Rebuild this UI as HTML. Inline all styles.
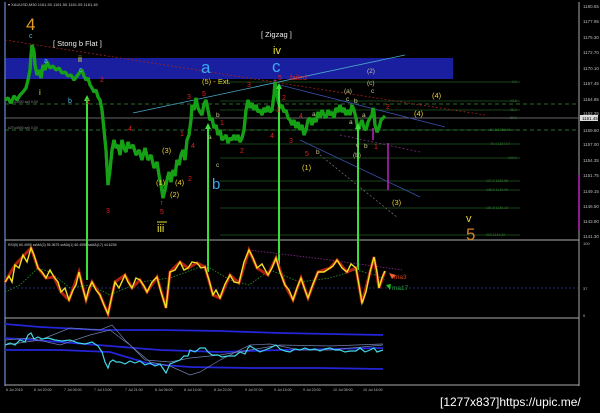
<!DOCTYPE html>
<html><head><meta charset="utf-8"><style>
html,body{margin:0;padding:0;background:#000;width:600px;height:413px;overflow:hidden}
svg{display:block}
text{font-family:"Liberation Sans",sans-serif}
</style></head><body>
<svg width="600" height="413" viewBox="0 0 600 413" xmlns="http://www.w3.org/2000/svg">
<rect width="600" height="413" fill="#000"/>
<rect x="5" y="58" width="448" height="21" fill="#1a1fa0"/>
<line x1="5" y1="2" x2="5" y2="386" stroke="#5870a8" stroke-width="1.5"/>
<line x1="579" y1="2" x2="579" y2="386" stroke="#aaa" stroke-width="1"/>
<line x1="5" y1="240" x2="579" y2="240" stroke="#aaa"/>
<line x1="5" y1="318" x2="579" y2="318" stroke="#aaa"/>
<line x1="5" y1="385" x2="579" y2="385" stroke="#aaa"/>
<g stroke="#1f5a1f" stroke-width="0.8">
<line x1="220" y1="82" x2="520" y2="82"/><line x1="220" y1="101" x2="520" y2="101"/>
<line x1="220" y1="110" x2="520" y2="110"/><line x1="220" y1="130" x2="520" y2="130"/>
<line x1="220" y1="144" x2="520" y2="144"/><line x1="220" y1="158" x2="520" y2="158"/>
<line x1="220" y1="181" x2="520" y2="181"/><line x1="220" y1="190" x2="520" y2="190"/>
<line x1="220" y1="208" x2="520" y2="208"/><line x1="220" y1="235" x2="520" y2="235"/>
</g>
<g fill="#2c7a2c" font-size="3.5">
<text x="512" y="83">0.0</text><text x="510" y="102">23.6</text><text x="510" y="111">38.2</text>
<text x="510" y="119">50.0</text><text x="490" y="131">61.8 1159.60</text><text x="490" y="145">76.4 1157.07</text>
<text x="508" y="159">100.0</text><text x="486" y="182">127.2 1150.88</text><text x="486" y="191">138.2 1149.30</text>
<text x="486" y="209">161.8 1146.10</text><text x="486" y="236">200 1141.30</text>
</g>
<line x1="5" y1="104" x2="579" y2="104" stroke="#3a8a3a" stroke-width="0.8" stroke-dasharray="4,3"/>
<line x1="5" y1="130" x2="579" y2="130" stroke="#3a8a3a" stroke-width="0.8" stroke-dasharray="4,3"/>
<line x1="5" y1="118" x2="579" y2="118" stroke="#888" stroke-width="0.8"/>
<g fill="#888" font-size="3.5"><text x="8" y="103">#2Tu4900 sell 0.00</text><text x="8" y="129">#2Tu4900 sell 0.00</text></g>
<line x1="5" y1="40" x2="485" y2="115" stroke="#a02020" stroke-width="0.8" stroke-dasharray="2,2"/>
<line x1="133" y1="113" x2="405" y2="55" stroke="#4aa8c8" stroke-width="0.8"/>
<line x1="280" y1="85" x2="445" y2="127" stroke="#3a50b0" stroke-width="0.8"/>
<line x1="300" y1="140" x2="420" y2="197" stroke="#3a50b0" stroke-width="0.8"/>
<line x1="320" y1="155" x2="398" y2="218" stroke="#777" stroke-width="0.7" stroke-dasharray="2,2"/>
<line x1="340" y1="135" x2="420" y2="152" stroke="#803080" stroke-width="0.8" stroke-dasharray="2,2"/>
<line x1="388" y1="143" x2="388" y2="190" stroke="#c020c0" stroke-width="1.5"/>
<line x1="373" y1="128" x2="373" y2="140" stroke="#c020c0" stroke-width="1.5"/>
<line x1="579" y1="175" x2="579" y2="230" stroke="#c020c0" stroke-width="1.5"/>
<g fill="none" stroke-linejoin="bevel">
<polyline id="p" stroke="#16a016" stroke-width="3.2" points="5,100 8,98 11,103 14,96 17,100 20,95 23,92 26,88 28,80 30,70 31,55 32,45 34,52 35,65 37,75 39,70 41,78 43,65 45,70 47,62 50,68 53,66 56,70 59,68 62,73 65,72 68,76 71,75 74,80 77,76 80,72 82,70 84,76 86,80 88,78 90,85 92,88 94,92 96,90 98,97 100,100 102,110 104,130 106,150 108,185 110,170 112,150 114,140 116,148 118,145 120,155 122,140 124,148 126,152 128,142 130,148 133,145 136,155 139,150 142,160 145,148 148,160 151,155 154,168 157,162 159,175 161,185 163,198 165,190 167,180 169,172 171,182 173,170 175,176 177,160 179,165 181,155 183,150 185,160 187,140 189,135 191,120 192,105 194,110 196,98 198,108 200,112 202,115 204,104 206,100 208,110 210,120 212,118 214,128 216,125 218,135 220,130 222,140 224,138 226,135 228,143 230,138 232,140 234,135 236,140 238,135 240,142 242,138 244,130 246,110 248,100 250,108 252,103 254,110 256,105 258,112 260,110 262,115 264,108 266,112 268,106 270,112 272,110 274,95 275,82 276,90 278,100 280,108 282,105 284,112 286,110 288,118 290,120 292,125 294,120 296,128 298,122 300,130 302,125 304,135 306,130 308,120 310,118 312,125 314,118 316,122 318,112 320,118 322,110 324,115 326,118 328,110 330,115 332,112 334,118 336,108 338,112 340,105 342,112 344,108 346,115 348,110 350,115 352,105 354,110 356,118 358,130 360,125 362,120 364,128 366,130 368,122 370,118 372,115 373,108 374,112 375,125 377,132 379,128 381,120 383,118 385,116"/>
<use href="#p" stroke="#48f048" stroke-width="1.4"/>
</g>
<g stroke="#3be03b" stroke-width="2">
<line x1="87" y1="99" x2="87" y2="280"/><line x1="208" y1="127" x2="208" y2="272"/>
<line x1="279" y1="87" x2="279" y2="268"/><line x1="358" y1="127" x2="358" y2="270"/>
</g>
<g fill="#3be03b">
<polygon points="84,101 87,95 90,101"/><polygon points="205,129 208,123 211,129"/>
<polygon points="276,89 279,83 282,89"/><polygon points="355,129 358,123 361,129"/>
</g>
<g fill="#bbb" font-size="4.5">
<text x="583" y="8">1180.55</text><text x="583" y="23">1177.95</text><text x="583" y="39">1175.30</text>
<text x="583" y="54">1172.70</text><text x="583" y="70">1170.10</text><text x="583" y="85">1167.45</text>
<text x="583" y="101">1164.85</text><text x="583" y="115">1162.25</text><text x="583" y="132">1159.60</text>
<text x="583" y="146">1157.00</text><text x="583" y="162">1154.35</text><text x="583" y="177">1151.75</text>
<text x="583" y="193">1149.15</text><text x="583" y="208">1146.50</text><text x="583" y="223">1143.90</text>
<text x="583" y="238">1141.30</text>
</g>
<rect x="580" y="115" width="18" height="6" fill="#ddd"/><text x="582" y="120" fill="#000" font-size="4.5">1161.45</text>
<text x="8" y="6" fill="#ccc" font-size="4">▾ XAUUSD,M30  1161.50 1161.50 1161.05 1161.45</text>
<g font-size="9">
<text x="26" y="30" fill="#e0a020" font-size="17">4</text>
<text x="29" y="38" fill="#4ab8e8" font-size="7">c</text>
<text x="53" y="46" fill="#eee" font-size="7.5">[ Stong b Flat ]</text>
<text x="44" y="63" fill="#4ab8e8" font-size="7">a</text>
<text x="78" y="62" fill="#e8e030" font-size="9">ii</text>
<text x="79" y="72" fill="#4ab8e8" font-size="7">c</text>
<text x="100" y="82" fill="#e02020" font-size="7">2</text>
<text x="39" y="95" fill="#e8e030" font-size="8">i</text>
<text x="68" y="103" fill="#4ab8e8" font-size="7">b</text>
<text x="201" y="73" fill="#3aa8f0" font-size="17">a</text>
<text x="202" y="84" fill="#e8d030" font-size="7.5">(5) - Ext.</text>
<text x="261" y="37" fill="#eee" font-size="7.5">[ Zigzag ]</text>
<text x="273" y="54" fill="#e8e030" font-size="11">iv</text>
<text x="272" y="72" fill="#3aa8f0" font-size="17">c</text>
<text x="278" y="80" fill="#e02020" font-size="7">5</text>
<text x="290" y="80" fill="#e02020" font-size="7">failed</text>
<text x="273" y="83" fill="#e040e0" font-size="7">+</text>
<text x="212" y="189" fill="#3aa8f0" font-size="15">b</text>
<text x="466" y="222" fill="#e8d030" font-size="11">v</text>
<text x="466" y="240" fill="#d08020" font-size="17">5</text>
<text x="157" y="232" fill="#e8e030" font-size="11">iii</text>
<line x1="157" y1="222" x2="167" y2="222" stroke="#e8e030"/>
<text x="160" y="205" fill="#3aa8f0" font-size="7">↑</text>
</g>
<g fill="#e02020" font-size="7">
<text x="187" y="99">3</text><text x="202" y="96">5</text><text x="247" y="87">3</text>
<text x="282" y="100">2</text><text x="276" y="112">1</text><text x="270" y="138">4</text>
<text x="289" y="143">3</text><text x="128" y="131">4</text><text x="180" y="136">1</text>
<text x="191" y="148">4</text><text x="240" y="153">2</text><text x="220" y="125">1</text>
<text x="188" y="181">2</text><text x="106" y="213">3</text><text x="160" y="214">5</text>
<text x="305" y="156">5</text><text x="386" y="109">2</text><text x="374" y="149">1</text>
<text x="299" y="118">4</text><text x="86" y="104">1</text>
</g>
<g fill="#e8d030" font-size="7.5">
<text x="162" y="153">(3)</text><text x="156" y="185">(1)</text><text x="175" y="185">(4)</text>
<text x="170" y="197">(2)</text><text x="302" y="170">(1)</text><text x="392" y="205">(3)</text>
<text x="432" y="98">(4)</text><text x="414" y="116">(4)</text>
</g>
<g fill="#c8c890" font-size="6.5">
<text x="367" y="73">(2)</text><text x="367" y="85">(c)</text><text x="371" y="93">c</text>
<text x="344" y="93">(a)</text><text x="346" y="101">c</text><text x="354" y="103">b</text>
<text x="349" y="124">a</text><text x="362" y="117">a</text><text x="312" y="116">a</text>
<text x="216" y="117">b</text><text x="208" y="139">a</text><text x="216" y="167">c</text>
<text x="316" y="154">b</text><text x="356" y="147">c</text><text x="364" y="148">b</text>
<text x="353" y="157">(b)</text>
</g>
<text x="8" y="246" fill="#ccc" font-size="3.5">RSI(5) 60.4955  ssMA(3) 55.3675  ssMA(1) 60.4955  ssMA(17) 44.6236</text>
<text x="583" y="245" fill="#bbb" font-size="4">100</text>
<text x="583" y="290" fill="#bbb" font-size="4">37</text>
<text x="583" y="317" fill="#bbb" font-size="4">0</text>
<line x1="5" y1="288" x2="579" y2="288" stroke="#2a3a9a" stroke-width="0.7" stroke-dasharray="2,2"/>
<polyline fill="none" stroke="#2a9a2a" stroke-width="0.8" stroke-dasharray="1.5,1.5" points="5,292 20,285 38,268 50,272 70,288 90,285 110,295 140,282 170,278 205,265 230,280 249,285 270,270 300,282 330,278 356,270 375,275 385,280"/>
<polyline fill="none" stroke="#8a2a8a" stroke-width="0.8" stroke-dasharray="1.5,1.5" points="249,250 330,260 402,270"/>
<polyline fill="none" stroke="#b02010" stroke-width="3" points="5,282 15,265 31,248 38,268 46,278 54,277 61,292 69,300 79,272 86,300 92,282 100,295 108,314 115,282 125,275 132,288 140,280 147,292 157,277 166,308 170,272 180,262 188,268 197,263 205,267 213,295 220,298 230,275 239,283 249,250 257,268 268,275 276,258 285,285 293,300 301,278 308,298 318,272 330,268 337,260 347,272 356,268 362,303 374,257 379,288 385,271"/>
<polyline fill="none" stroke="#f4e020" stroke-width="1.4" points="5,282 9,276 12,282 15,265 19,268 23,255 27,262 31,248 34,255 38,268 42,272 46,278 50,270 54,277 58,282 61,292 65,288 69,300 73,290 76,285 79,272 82,285 86,300 89,288 92,282 96,290 100,295 104,305 108,314 111,300 115,282 119,288 125,275 128,282 132,288 136,278 140,280 144,286 147,292 152,282 157,277 161,292 166,308 168,290 170,272 175,270 180,262 184,270 188,268 192,262 197,263 201,268 205,267 209,280 213,295 216,290 220,298 225,284 230,275 234,282 239,283 244,262 249,250 253,258 257,268 262,264 268,275 272,268 276,258 280,272 285,285 289,290 293,300 297,288 301,278 305,290 308,298 313,284 318,272 324,272 330,268 333,266 337,260 342,268 347,272 351,264 356,268 359,285 362,303 366,292 370,272 374,257 377,272 379,288 382,278 385,271"/>
<polygon points="389,273 396,275 392,279" fill="#f06030"/>
<text x="394" y="279" fill="#e04010" font-size="6.5">ma3</text>
<polygon points="386,285 391,284 390,290" fill="#20c020"/>
<text x="392" y="290" fill="#20a040" font-size="6.5">ma17</text>
<polyline fill="none" stroke="#2424d8" stroke-width="1.8" points="5,324 40,327 100,330 160,330 220,331 280,333 330,334 383,335"/>
<polyline fill="none" stroke="#2424d8" stroke-width="1.8" points="5,338 60,342 110,346 160,350 220,352 280,350 330,349 383,348"/>
<polyline fill="none" stroke="#2424d8" stroke-width="1.8" points="5,350 60,350 110,352 150,364 190,367 250,368 320,368 383,369"/>
<polyline fill="none" stroke="#7080b0" stroke-width="0.7" points="5,340 30,338 60,345 90,335 110,330 130,345 150,362 170,366 190,375 200,372 220,360 250,345 270,344 300,350 330,350 383,345"/>
<polyline fill="none" stroke="#7080b0" stroke-width="0.7" points="5,345 40,340 70,328 100,330 112,325 125,340 145,360 170,362 190,358 220,355 250,350 280,345 330,346 383,344"/>
<polyline fill="none" stroke="#40d8e8" stroke-width="1.2" points="5,345 10,343 15,345 20,340 25,342 28,335 31,333 34,339 38,337 42,339 48,338 55,340 62,341 70,340 78,343 85,344 92,342 98,346 102,352 105,362 108,368 110,362 113,360 116,362 120,362 125,364 130,361 135,363 140,361 145,365 150,363 155,366 160,364 164,370 166,373 170,364 175,362 180,360 184,356 188,356 190,350 195,352 200,348 205,348 208,352 212,355 218,355 222,357 228,356 235,356 240,352 245,354 248,348 250,346 255,349 260,352 265,350 270,348 276,345 280,349 285,351 290,352 295,349 300,350 305,348 310,350 315,349 320,351 325,349 330,348 335,350 340,350 345,352 350,351 356,351 360,348 365,352 370,350 374,348 377,352 380,351 383,350"/>
<g fill="#bbb" font-size="3.6">
<text x="6" y="391">6 Jul 2015</text><text x="34" y="391">6 Jul 20:00</text><text x="64" y="391">7 Jul 05:00</text>
<text x="94" y="391">7 Jul 13:00</text><text x="125" y="391">7 Jul 21:00</text><text x="155" y="391">8 Jul 06:00</text>
<text x="184" y="391">8 Jul 14:00</text><text x="214" y="391">8 Jul 22:00</text><text x="245" y="391">9 Jul 07:00</text>
<text x="274" y="391">9 Jul 15:00</text><text x="303" y="391">9 Jul 23:00</text><text x="333" y="391">10 Jul 08:00</text>
<text x="363" y="391">10 Jul 16:00</text>
</g>
<text x="440" y="406" fill="#fff" font-size="12">[1277x837]https://upic.me/</text>
</svg>
</body></html>
